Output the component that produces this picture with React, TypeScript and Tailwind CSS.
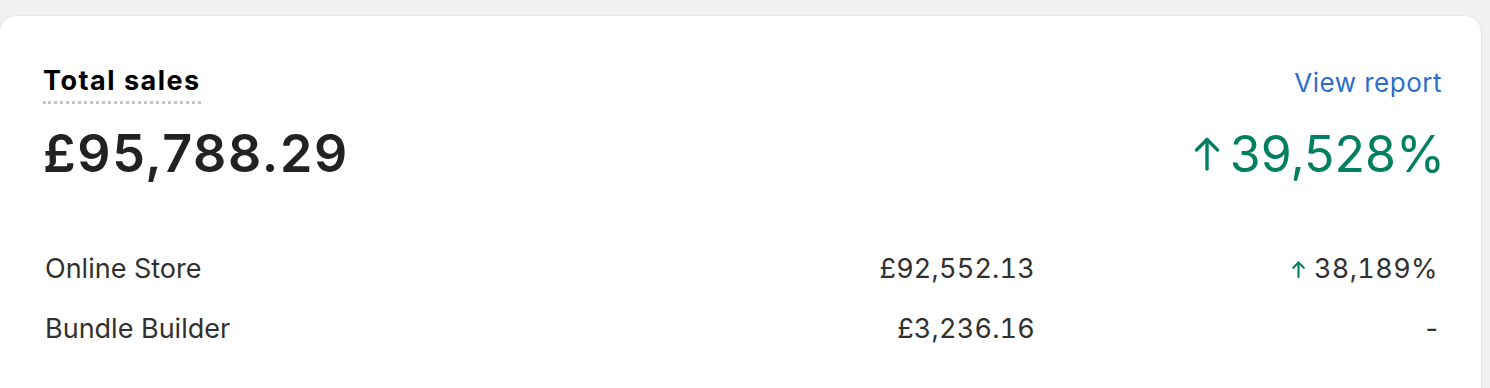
import React from "react";

function BigArrow() {
  return (
    <svg viewBox="0 0 26 34" className="w-[26px] h-[34px] mr-[10px]" fill="none" stroke="currentColor" strokeWidth={3.4} strokeLinecap="round" strokeLinejoin="round">
      <path d="M13 32V2.5" />
      <path d="M2.5 13L13 2.5L23.5 13" />
    </svg>
  );
}

function SmallArrow() {
  return (
    <svg viewBox="0 0 13 17" className="w-[13px] h-[17px] mr-[9px] text-[#008060]" fill="none" stroke="currentColor" strokeWidth={2.1} strokeLinecap="round" strokeLinejoin="round">
      <path d="M6.5 16V1.5" />
      <path d="M1.3 6.7L6.5 1.5L11.7 6.7" />
    </svg>
  );
}

export default function App() {
  return (
    <div className="w-[1490px] h-[388px] bg-[#f1f1f1] pt-4 pr-[9px] overflow-hidden" style={{ fontFamily: "Inter, 'Noto Sans', sans-serif" }}>
      <div className="h-[400px] bg-white rounded-[16px] shadow-[0_1px_2px_rgba(0,0,0,0.14),0_0_0_1px_rgba(0,0,0,0.03)] pl-[43px] pr-[39px] pt-[49px]">
        <div className="flex items-start justify-between">
          <span className="text-[27px] leading-[32px] font-bold tracking-[1.5px] text-[#000000] border-b-[3px] border-dotted border-[#bfc3c8] pb-[4px]">Total sales</span>
          <span className="mt-[2px] text-[26px] leading-[32px] tracking-[0.5px] text-[#2c6ecb]">View report</span>
        </div>
        <div className="flex items-center justify-between mt-[20px]">
          <span className="text-[52px] leading-[60px] font-semibold text-[#202223] tracking-[1.6px]">£95,788.29</span>
          <span className="flex items-center text-[#008060] text-[50px] leading-[60px] -mr-[3px]">
            <BigArrow />
            39,528%
          </span>
        </div>
        <div className="mt-[55px] text-[27px] leading-[60px] text-[#303030]">
          <div className="grid grid-cols-[1fr_300px_403px] pr-[4px]">
            <span className="pl-[2px]">Online Store</span>
            <span className="text-right tabular-nums tracking-[0.2px]">£92,552.13</span>
            <span className="flex items-center justify-end tabular-nums tracking-[0.4px]">
              <SmallArrow />
              38,189%
            </span>
          </div>
          <div className="grid grid-cols-[1fr_300px_403px] pr-[4px]">
            <span className="pl-[2px]">Bundle Builder</span>
            <span className="text-right tabular-nums tracking-[0.2px]">£3,236.16</span>
            <span className="text-right">-</span>
          </div>
        </div>
      </div>
    </div>
  );
}
